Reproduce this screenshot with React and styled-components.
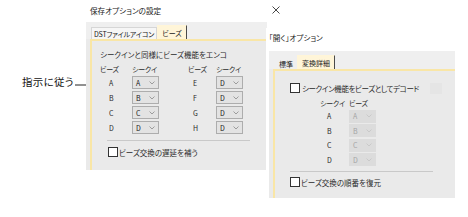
import React from 'react';
import styled, { createGlobalStyle } from 'styled-components';

const GlobalStyle = createGlobalStyle`
  html, body { margin: 0; padding: 0; background: #ffffff; }
  body { font-family: "Noto Sans CJK JP", "Noto Sans", sans-serif; color: #2a2a2a; }
`;

const CREAM = '#f9e6a6';
const TAB_ACTIVE = '#fff5d8';

const Desktop = styled.div`
  position: relative;
  width: 468px;
  height: 217px;
  overflow: hidden;
  background: #ffffff;
  font-feature-settings: "palt";
`;

const Callout = styled.div`
  position: absolute;
  left: 22px;
  top: 75px;
  display: flex;
  align-items: flex-end;
  gap: 1px;
`;

const CalloutText = styled.span`
  font-size: 10.5px;
  line-height: 14px;
  letter-spacing: 0.3px;
  color: #111;
`;

const Window = styled.div`
  position: absolute;
  left: ${p => p.$x}px;
  top: ${p => p.$y}px;
  width: ${p => p.$w}px;
  background: #ffffff;
  display: flex;
  flex-direction: column;
`;

const TitleBar = styled.div`
  height: ${p => p.$h}px;
  box-sizing: border-box;
  display: flex;
  align-items: center;
  justify-content: space-between;
  padding: ${p => p.$pad};
  font-size: 7.6px;
  color: #222;
`;

const Panel = styled.div`
  width: ${p => p.$w}px;
  height: ${p => p.$h}px;
  margin-left: ${p => p.$ml}px;
  background: #eaeaea;
  display: flex;
  flex-direction: column;
`;

const TabStrip = styled.div`
  height: ${p => p.$h}px;
  flex: none;
  display: flex;
  align-items: flex-end;
  padding-left: ${p => p.$pl}px;
  background: #efefef;
`;

const Tab = styled.div`
  height: ${p => (p.$active ? 14 : 12)}px;
  box-sizing: border-box;
  padding: 0 ${p => p.$px || 3}px;
  display: flex;
  align-items: center;
  font-size: 7px;
  letter-spacing: ${p => p.$ls || 0}px;
  white-space: nowrap;
  color: #222;
  background: ${p => (p.$active ? TAB_ACTIVE : p.$plain ? 'transparent' : '#f6f6f6')};
  border: 1px solid ${p => (p.$active ? TAB_ACTIVE : p.$plain ? 'transparent' : '#d6d6d6')};
  border-bottom: none;
  border-right: 1px solid ${p => (p.$active ? '#4a4a4a' : p.$plain ? 'transparent' : '#d6d6d6')};
`;

const Content = styled.div`
  flex: 1;
  margin-left: 4px;
  border-top: 2px solid ${CREAM};
  border-left: 2px solid ${CREAM};
  background: #eaeaea;
  display: flex;
  flex-direction: column;
  align-items: flex-start;
  padding: ${p => p.$pad};
  font-size: 7.5px;
`;

const Line = styled.div`
  height: 10px;
  line-height: 10px;
  white-space: nowrap;
  font-size: 7.5px;
`;

const Grid = styled.div`
  display: grid;
  grid-template-columns: ${p => p.$cols};
  grid-auto-rows: 13px;
  grid-template-rows: 10px;
  row-gap: ${p => p.$gap}px;
  align-items: center;
  margin-top: ${p => p.$mt}px;
  margin-left: ${p => p.$ml || 0}px;
`;

const Head = styled.div`
  font-size: 7px;
  line-height: 10px;
  white-space: nowrap;
  letter-spacing: -0.2px;
  grid-column: ${p => p.$col};
`;

const Letter = styled.div`
  font-size: 7px;
  padding-left: ${p => p.$pl}px;
  grid-column: ${p => p.$col};
  color: #2a2a2a;
`;

const Select = styled.div`
  grid-column: ${p => p.$col};
  width: 27px;
  height: 13px;
  box-sizing: border-box;
  display: flex;
  align-items: center;
  justify-content: space-between;
  padding: 0 3px 0 3px;
  font-size: 7px;
  background: ${p => (p.$disabled ? '#dcdcdc' : '#e3e3e3')};
  border: 1px solid ${p => (p.$disabled ? '#dcdcdc' : '#adadad')};
  color: ${p => (p.$disabled ? '#a4a4a4' : '#1a1a1a')};
`;

const Separator = styled.div`
  width: ${p => p.$w}px;
  height: 1px;
  background: #c9c9c9;
  margin-top: ${p => p.$mt}px;
  margin-left: ${p => p.$ml}px;
`;

const CheckRow = styled.div`
  display: flex;
  align-items: center;
  height: 10px;
  margin-top: ${p => p.$mt}px;
  margin-left: ${p => p.$ml}px;
  font-size: 7.5px;
  letter-spacing: ${p => p.$ls || 0}px;
  white-space: nowrap;
`;

const Box = styled.span`
  width: 10px;
  height: 10px;
  box-sizing: border-box;
  border: 1px solid #333;
  background: #fff;
  margin-right: ${p => p.$gap}px;
  flex: none;
`;

const Ghost = styled.span`
  width: 12px;
  height: 11px;
  margin-left: 11px;
  background: #e5e5e5;
`;

const Chevron = ({ color = '#8a8a8a' }) => (
  <svg width="6" height="4" viewBox="0 0 6 4">
    <polyline points="0.5,0.5 3,3 5.5,0.5" fill="none" stroke={color} strokeWidth="0.8" />
  </svg>
);

const CloseIcon = () => (
  <svg width="8" height="8" viewBox="0 0 8 8">
    <path d="M0.5 0.5 L7.5 7.5 M7.5 0.5 L0.5 7.5" stroke="#333" strokeWidth="0.9" />
  </svg>
);

const Arrow = () => (
  <svg width="27" height="8" viewBox="0 0 27 8" style={{ marginBottom: 1 }}>
    <line x1="0" y1="5" x2="24" y2="5" stroke="#222" strokeWidth="1" />
    <polygon points="21,3 26,5 21,7" fill="#222" />
  </svg>
);

const leftRows = [
  ['A', 'A', 'E', 'D'],
  ['B', 'B', 'F', 'D'],
  ['C', 'C', 'G', 'D'],
  ['D', 'D', 'H', 'D'],
];

const rightRows = ['A', 'B', 'C', 'D'];

export default function App() {
  return (
    <>
      <GlobalStyle />
      <Desktop>
        <Callout>
          <CalloutText>指示に従う</CalloutText>
          <Arrow />
        </Callout>

        <Window $x={86} $y={0} $w={199}>
          <TitleBar $h={22} $pad="0 5px 2px 4px">
            <span>保存オプションの設定</span>
            <CloseIcon />
          </TitleBar>
          <Panel $w={181} $h={148} $ml={0}>
            <TabStrip $h={17} $pl={5}>
              <Tab $px={2} $ls={-0.2}>DSTファイルアイコン</Tab>
              <Tab $active $px={4}>ビーズ</Tab>
            </TabStrip>
            <Content $pad="9px 0 0 8px">
              <Line>シークインと同様にビーズ機能をエンコ</Line>
              <Grid $cols="32px 27px 29px 28px 27px" $gap={2} $mt={4}>
                <Head $col={1}>ビーズ</Head>
                <Head $col={2}>シークイ</Head>
                <Head $col={4}>ビーズ</Head>
                <Head $col={5}>シークイ</Head>
                {leftRows.map(([l1, v1, l2, v2]) => (
                  <React.Fragment key={l1}>
                    <Letter $col={1} $pl={9}>{l1}</Letter>
                    <Select $col={2}>{v1}<Chevron /></Select>
                    <Letter $col={4} $pl={5}>{l2}</Letter>
                    <Select $col={5}>{v2}<Chevron /></Select>
                  </React.Fragment>
                ))}
              </Grid>
              <Separator $w={143} $mt={6} $ml={7} />
              <CheckRow $mt={6} $ml={8}>
                <Box $gap={1} />
                ビーズ交換の遅延を補う
              </CheckRow>
            </Content>
          </Panel>
        </Window>

        <Window $x={266} $y={28} $w={194}>
          <TitleBar $h={23} $pad="0 0 4px 3px">
            <span>「開く」オプション</span>
          </TitleBar>
          <Panel $w={186} $h={147} $ml={3}>
            <TabStrip $h={18} $pl={6}>
              <Tab $plain $px={3}>標準</Tab>
              <Tab $active $px={4}>変換詳細</Tab>
            </TabStrip>
            <Content $pad="12px 0 0 15px">
              <CheckRow $mt={0} $ml={0} $ls={-0.4}>
                <Box $gap={2} />
                シークイン機能をビーズとしてデコード
                <Ghost />
              </CheckRow>
              <Grid $cols="29px 27px" $gap={1.5} $mt={5} $ml={30}>
                <Head $col={1}>シークイ</Head>
                <Head $col={2}>ビーズ</Head>
                {rightRows.map(l => (
                  <React.Fragment key={l}>
                    <Letter $col={1} $pl={7}>{l}</Letter>
                    <Select $col={2} $disabled>{l}<Chevron color="#c4c4c4" /></Select>
                  </React.Fragment>
                ))}
              </Grid>
              <Separator $w={143} $mt={5} $ml={0} />
              <CheckRow $mt={5} $ml={0}>
                <Box $gap={1} />
                ビーズ交換の順番を復元
              </CheckRow>
            </Content>
          </Panel>
        </Window>
      </Desktop>
    </>
  );
}
